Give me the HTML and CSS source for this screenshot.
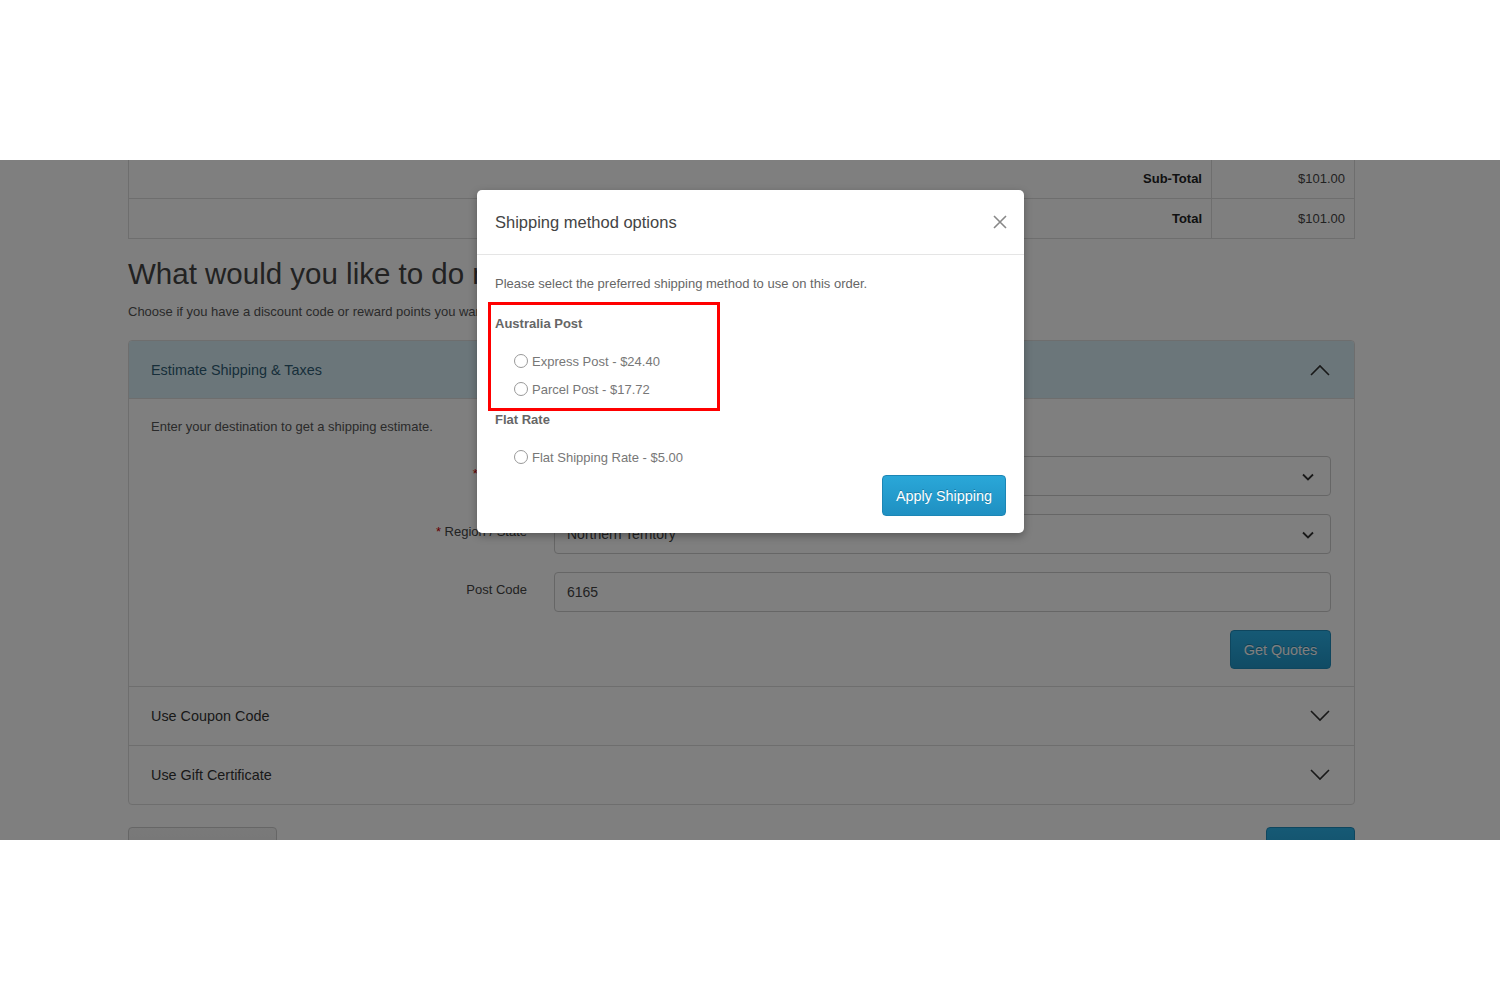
FILE: index.html
```html
<!DOCTYPE html>
<html lang="en">
    <head>
        <meta charset="UTF-8">
        <title>Shopping Cart - Shipping method options</title>
        <link rel="stylesheet" href="styles.css">
    </head>
    <body>
        <div class="shot">
            <div class="page">
                <table class="totals">
                    <tr>
                        <td class="t-label">Sub-Total</td>
                        <td class="t-value">$101.00</td>
                    </tr>
                    <tr>
                        <td class="t-label">Total</td>
                        <td class="t-value">$101.00</td>
                    </tr>
                </table>

                <h1 class="next-title">What would you like to do next?</h1>
                <p class="next-intro">Choose if you have a discount code or reward points you want to use or would like to estimate your delivery cost.</p>

                <div class="accordion">
                    <div class="acc-item open">
                        <div class="acc-head">
                            <span>Estimate Shipping &amp; Taxes</span>
                            <svg class="acc-arrow" width="20" height="12" viewBox="0 0 20 12"><path d="M1 11 L10 2 L19 11" fill="none" stroke="#333" stroke-width="1.6"/></svg>
                        </div>
                        <div class="acc-body">
                            <p class="acc-note">Enter your destination to get a shipping estimate.</p>
                            <div class="form-row">
                                <label class="form-label"><span class="req">*</span> Country</label>
                                <div class="field select">
                                    <span>Australia</span>
                                    <svg width="12" height="8" viewBox="0 0 12 8"><path d="M1 1.5 L6 6.5 L11 1.5" fill="none" stroke="#333" stroke-width="1.8"/></svg>
                                </div>
                            </div>
                            <div class="form-row">
                                <label class="form-label"><span class="req">*</span> Region / State</label>
                                <div class="field select">
                                    <span>Northern Territory</span>
                                    <svg width="12" height="8" viewBox="0 0 12 8"><path d="M1 1.5 L6 6.5 L11 1.5" fill="none" stroke="#333" stroke-width="1.8"/></svg>
                                </div>
                            </div>
                            <div class="form-row">
                                <label class="form-label">Post Code</label>
                                <div class="field">6165</div>
                            </div>
                            <div class="form-actions">
                                <span class="btn btn-primary btn-quotes">Get Quotes</span>
                            </div>
                        </div>
                    </div>
                    <div class="acc-item">
                        <div class="acc-head">
                            <span>Use Coupon Code</span>
                            <svg class="acc-arrow" width="20" height="12" viewBox="0 0 20 12"><path d="M1 1 L10 10 L19 1" fill="none" stroke="#333" stroke-width="1.6"/></svg>
                        </div>
                    </div>
                    <div class="acc-item">
                        <div class="acc-head">
                            <span>Use Gift Certificate</span>
                            <svg class="acc-arrow" width="20" height="12" viewBox="0 0 20 12"><path d="M1 1 L10 10 L19 1" fill="none" stroke="#333" stroke-width="1.6"/></svg>
                        </div>
                    </div>
                </div>

                <div class="buttons">
                    <span class="btn btn-default">Continue Shopping</span>
                    <span class="btn btn-primary">Checkout</span>
                </div>
            </div>

            <div class="backdrop"></div>

            <div class="modal">
                <div class="modal-head">
                    <span class="modal-title">Shipping method options</span>
                    <svg class="modal-close" width="16" height="16" viewBox="0 0 16 16"><path d="M2 2 L14 14 M14 2 L2 14" fill="none" stroke="#888" stroke-width="1.6"/></svg>
                </div>
                <div class="modal-body">
                    <p class="modal-note">Please select the preferred shipping method to use on this order.</p>
                    <p class="ship-group">Australia Post</p>
                    <label class="ship-option"><input type="radio" name="shipping"> Express Post - $24.40</label>
                    <label class="ship-option"><input type="radio" name="shipping"> Parcel Post - $17.72</label>
                    <p class="ship-group flat">Flat Rate</p>
                    <label class="ship-option"><input type="radio" name="shipping"> Flat Shipping Rate - $5.00</label>
                    <div class="modal-actions">
                        <span class="btn btn-primary btn-apply">Apply Shipping</span>
                    </div>
                </div>
                <div class="mark"></div>
            </div>
        </div>
    </body>
</html>
```

FILE: styles.css
```css
body{margin: 0; padding: 0; background: #fff; font-family: "Liberation Sans", Arial, sans-serif; font-size: 13px; color: #555;}
.shot{
    position: relative;
    margin-top: 160px;
    height: 680px;
    overflow: hidden;
}
.page{
    width: 1227px;
    margin-left: 128px;
}

/* totals table */
.totals{
    width: 100%;
    margin-top: -2px;
    border-collapse: collapse;
}
.totals td{
    height: 39px;
    padding: 0 9px;
    border: 1px solid #ddd;
    text-align: right;
}
.t-label{
    font-weight: bold;
    color: #222;
}
.t-value{
    width: 124px;
    color: #444;
}

.next-title{
    margin: 18px 0 13px;
    font-size: 29.5px;
    line-height: 33px;
    font-weight: normal;
    color: #444;
}
.next-intro{
    margin: 0 0 20px;
    line-height: 17px;
}

/* accordion */
.accordion{
    border: 1px solid #ddd;
    border-radius: 4px;
    overflow: hidden;
}
.acc-item + .acc-item{
    border-top: 1px solid #ddd;
}
.acc-head{
    display: flex;
    align-items: center;
    justify-content: space-between;
    height: 58px;
    padding: 0 24px 0 22px;
    font-size: 14.4px;
    color: #333;
}
.open .acc-head{
    height: 57px;
    background: #d7edf4;
    color: #2f5d75;
    border-bottom: 1px solid #ddd;
}
.acc-body{
    padding: 19px 23px 17px 22px;
}
.acc-note{
    margin: 0 0 21px;
    line-height: 17px;
}
.form-row{
    display: grid;
    grid-template-columns: 376px 1fr;
    column-gap: 27px;
    align-items: center;
    margin-bottom: 18px;
}
.form-label{
    text-align: right;
    color: #444;
    margin-top: -5px;
}
.req{
    color: #c00;
}
.field{
    display: flex;
    align-items: center;
    justify-content: space-between;
    height: 38px;
    padding: 0 16px 0 12px;
    border: 1px solid #ccc;
    border-radius: 4px;
    font-size: 14px;
    color: #444;
}
.select svg{
    margin-top: 1px;
}
.form-actions{
    display: flex;
    justify-content: flex-end;
}

/* buttons */
.btn{
    display: inline-flex;
    align-items: center;
    justify-content: center;
    box-sizing: border-box;
    font-size: 14.4px;
    border-radius: 4px;
    border: 1px solid transparent;
}
.btn-primary{
    color: #fff;
    background: linear-gradient(#2cb3ea, #2197c9);
    border-color: #1f8dbd;
    text-shadow: 0 -1px 0 rgba(0,0,0,0.25);
}
.btn-default{
    color: #333;
    background: linear-gradient(#f4f4f4, #e6e6e6);
    border-color: #ccc;
}
.btn-quotes{
    width: 101px;
    height: 39px;
}
.buttons{
    display: flex;
    justify-content: space-between;
    margin-top: 22px;
}
.buttons .btn{
    align-items: flex-start;
    height: 46px;
    padding: 18px 14px 0;
}
.buttons .btn-default{
    width: 149px;
}
.buttons .btn-primary{
    width: 89px;
}

.backdrop{
    position: absolute;
    left: 0;
    top: 0;
    right: 0;
    bottom: 0;
    background: rgba(0,0,0,0.5);
}

/* modal */
.modal{
    position: absolute;
    left: 477px;
    top: 30px;
    width: 547px;
    background: #fff;
    border-radius: 5px;
    box-shadow: 0 3px 9px rgba(0,0,0,0.3);
}
.modal-head{
    display: flex;
    align-items: center;
    justify-content: space-between;
    height: 64px;
    padding: 0 16px 0 18px;
    border-bottom: 1px solid #e5e5e5;
}
.modal-title{
    font-size: 16.5px;
    color: #444;
}
.modal-body{
    padding: 20px 18px 17px;
}
.modal-note{
    margin: 0 0 23px;
    line-height: 17px;
    color: #666;
}
.ship-group{
    margin: 0 0 19px;
    line-height: 17px;
    font-weight: bold;
    color: #666;
}
.ship-group.flat{
    margin-top: 12px;
}
.ship-option{
    display: flex;
    align-items: center;
    height: 20px;
    margin-bottom: 8px;
    padding-left: 19px;
    color: #777;
}
.ship-option input{
    appearance: none;
    width: 14px;
    height: 14px;
    margin: 0 4px 0 0;
    border: 1px solid #999;
    border-radius: 50%;
    background: #fff;
}
.modal-actions{
    display: flex;
    justify-content: flex-end;
}
.btn-apply{
    width: 124px;
    height: 41px;
    background: linear-gradient(#2aa7d8, #1f90c2);
    border-color: #1c86b5;
}
.mark{
    position: absolute;
    left: 11px;
    top: 112px;
    width: 226px;
    height: 103px;
    border: 3px solid #f00;
}
```
